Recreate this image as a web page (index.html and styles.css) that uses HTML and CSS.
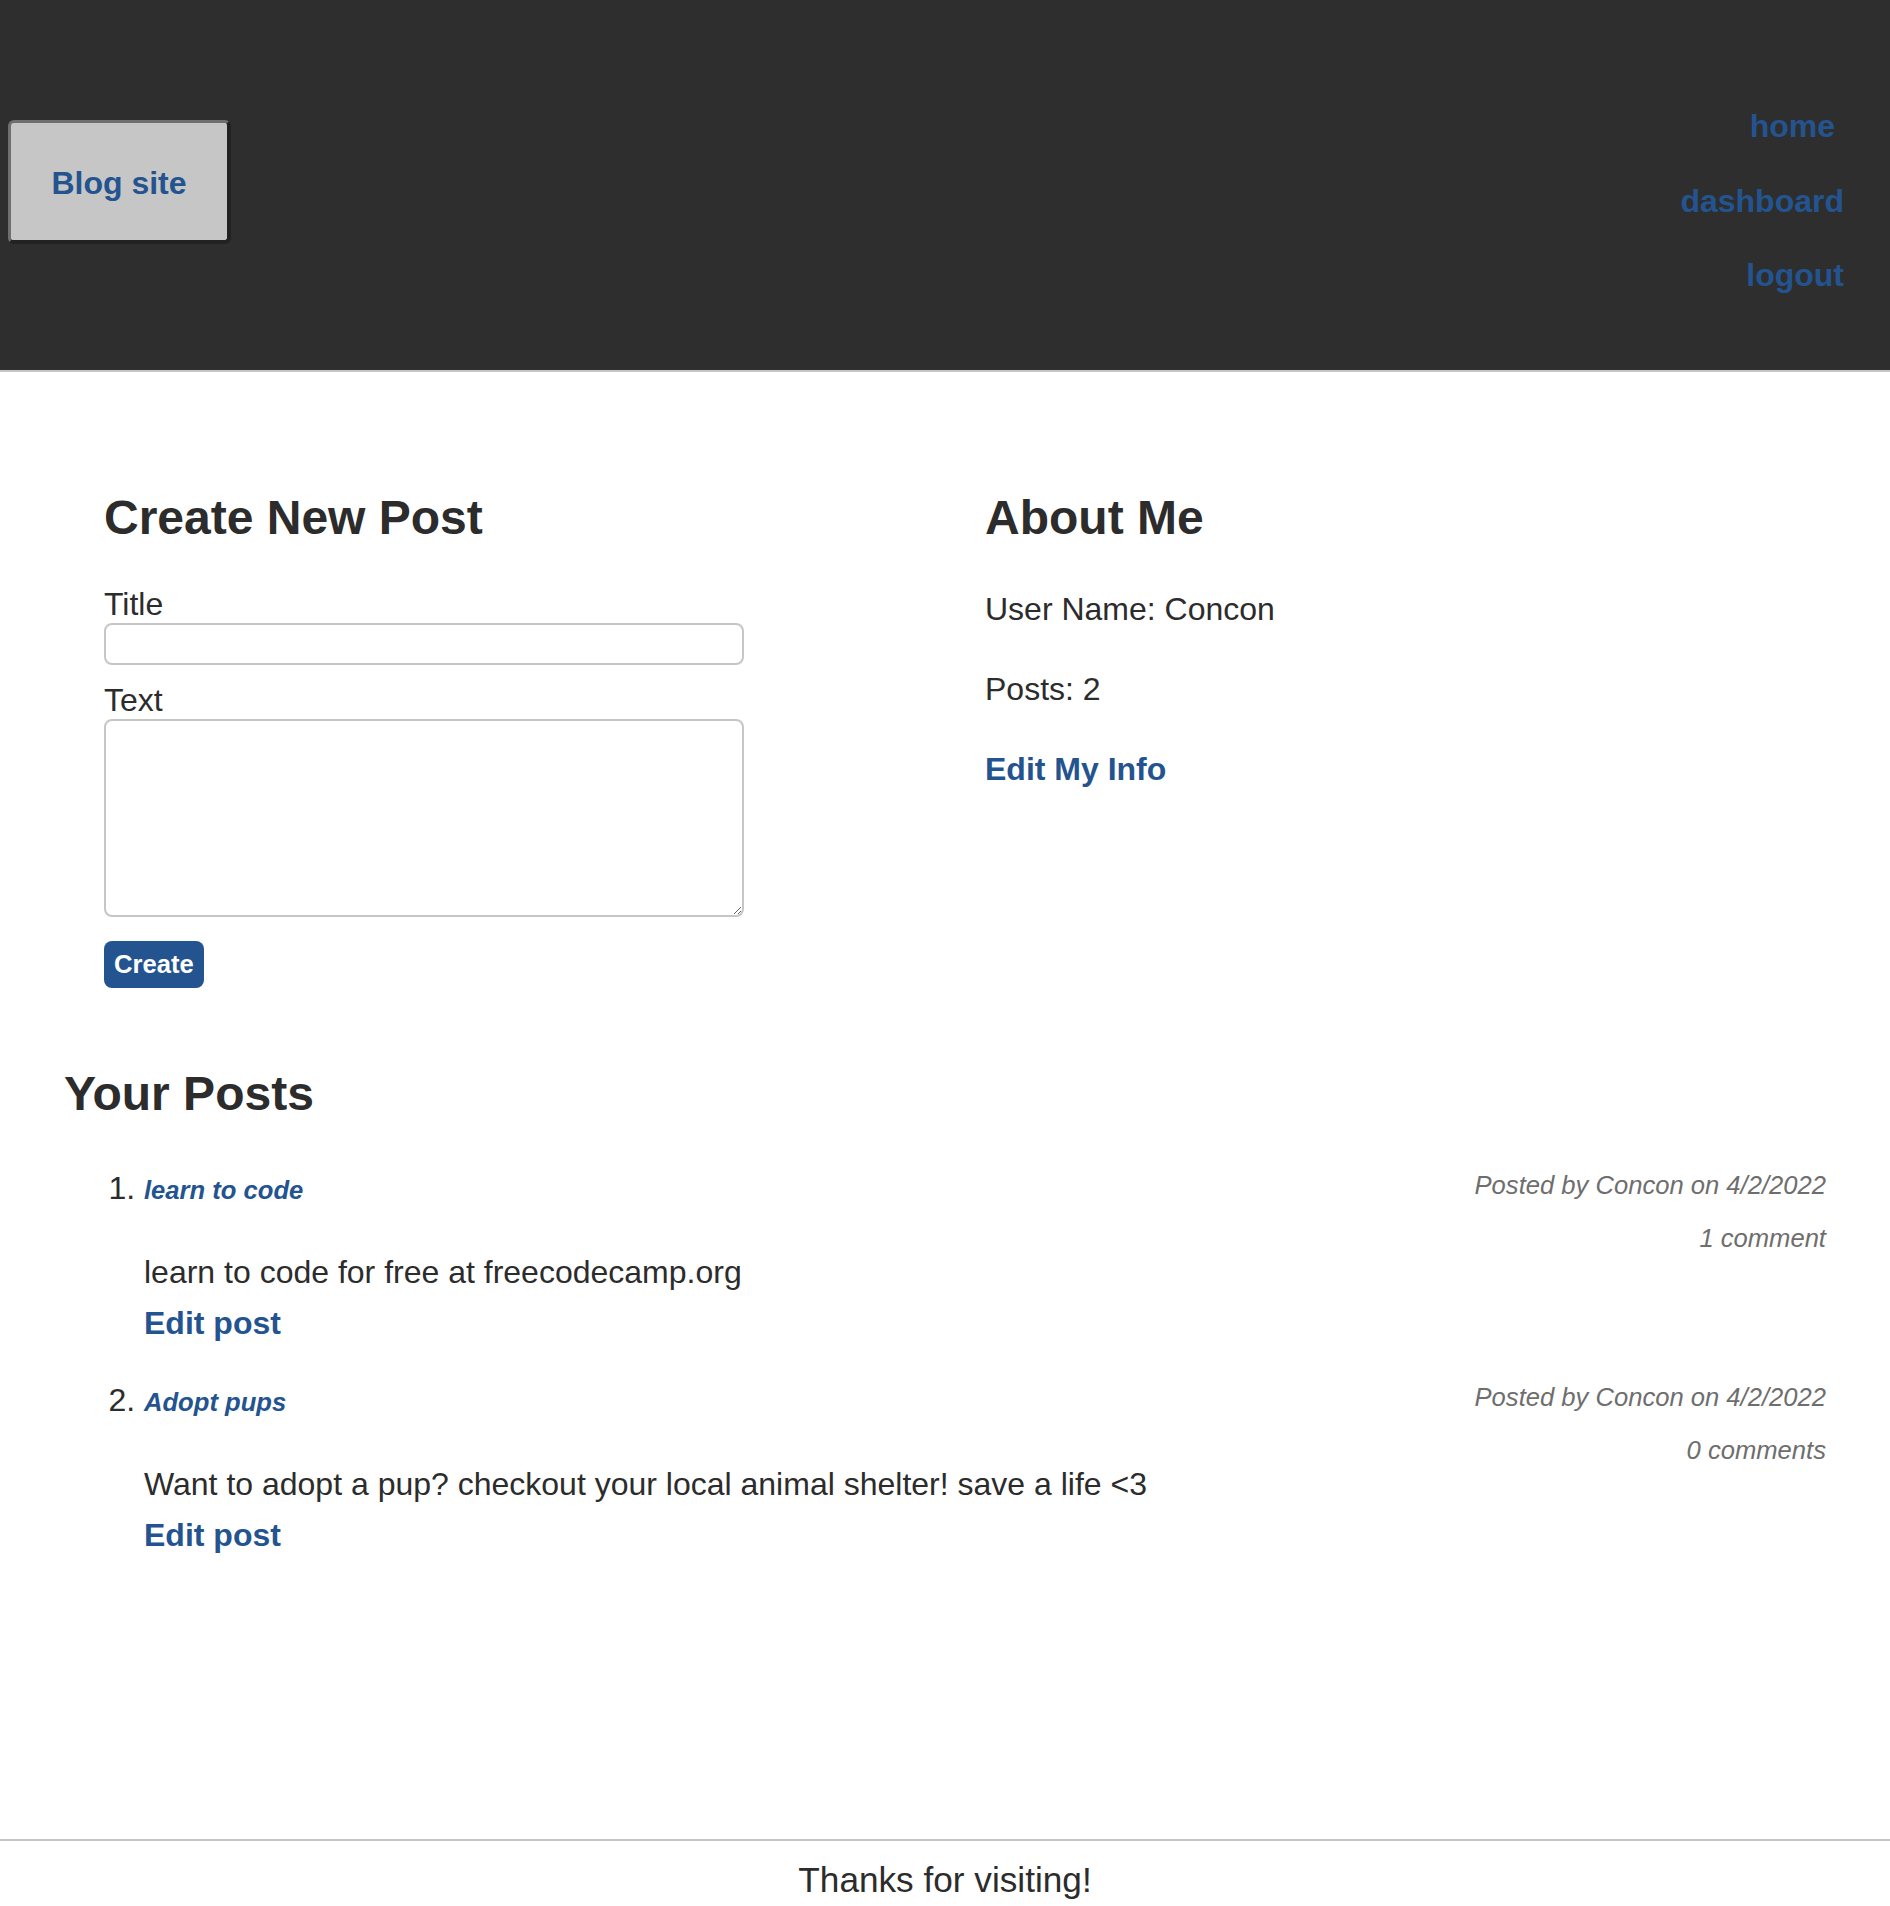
FILE: index.html
```html
<!DOCTYPE html>
<html lang="en">
<head>
<meta charset="utf-8">
<title>Blog site</title>
<link rel="stylesheet" href="styles.css">
</head>
<body>
<header class="site-header">
  <a class="logo" href="#">Blog site</a>
  <nav class="nav">
    <a class="nav-link nav-home" href="#">home</a>
    <a class="nav-link" href="#">dashboard</a>
    <a class="nav-link" href="#">logout</a>
  </nav>
</header>
<main class="main">
  <div class="columns">
    <section class="col">
      <h2 class="heading">Create New Post</h2>
      <form class="post-form">
        <label class="field-label first" for="title">Title</label>
        <input class="field-input" id="title" type="text">
        <label class="field-label second" for="text">Text</label>
        <textarea class="field-textarea" id="text"></textarea>
        <button class="create-btn" type="button">Create</button>
      </form>
    </section>
    <section class="col">
      <h2 class="heading">About Me</h2>
      <p class="about-line about-first">User Name: Concon</p>
      <p class="about-line about-second">Posts: 2</p>
      <a class="about-link" href="#">Edit My Info</a>
    </section>
  </div>
  <section class="posts">
    <h2 class="heading">Your Posts</h2>
    <ol class="post-list">
      <li class="post">
        <div class="post-head">
          <div class="post-title-line"><a class="post-title" href="#">learn to code</a></div>
          <div class="meta">
            <p class="meta-line">Posted by Concon on 4/2/2022</p>
            <p class="meta-line meta-count">1 comment</p>
          </div>
        </div>
        <p class="post-body">learn to code for free at freecodecamp.org</p>
        <a class="edit-link" href="#">Edit post</a>
      </li>
      <li class="post">
        <div class="post-head">
          <div class="post-title-line"><a class="post-title" href="#">Adopt pups</a></div>
          <div class="meta">
            <p class="meta-line">Posted by Concon on 4/2/2022</p>
            <p class="meta-line meta-count">0 comments</p>
          </div>
        </div>
        <p class="post-body">Want to adopt a pup? checkout your local animal shelter! save a life &lt;3</p>
        <a class="edit-link" href="#">Edit post</a>
      </li>
    </ol>
  </section>
</main>
<footer class="site-footer">Thanks for visiting!</footer>
</body>
</html>
```
FILE: styles.css
```css
html, body {
  margin: 0;
  padding: 0;
}

body {
  font-family: "Liberation Sans", Arial, Helvetica, sans-serif;
  font-size: 32px;
  line-height: 37px;
  color: #2c2c2c;
  background: #ffffff;
}

a {
  text-decoration: none;
  color: #24548f;
}

.site-header {
  background: #2e2e2e;
  height: 370px;
  border-bottom: 2px solid #c6c6c6;
  display: flex;
  justify-content: space-between;
  align-items: flex-start;
}

.logo {
  margin: 120px 0 0 8px;
  width: 223px;
  height: 124px;
  box-sizing: border-box;
  display: flex;
  align-items: center;
  justify-content: center;
  background: #c6c6c6;
  border-style: solid;
  border-width: 3px 4px 4px 3px;
  border-color: #6f6f6f #222222 #222222 #6f6f6f;
  border-radius: 6px;
  font-weight: bold;
  font-size: 32px;
  color: #24548f;
  padding-top: 3px;
}

.nav {
  margin: 108px 46px 0 0;
  display: flex;
  flex-direction: column;
  align-items: flex-end;
  gap: 37.5px;
}

.nav-link {
  font-weight: bold;
  font-size: 32px;
  line-height: 37px;
}

.nav-home {
  margin-right: 9px;
}

.main {
  padding: 0 64px;
}

.columns {
  display: grid;
  grid-template-columns: 1fr 1fr;
  padding-top: 118px;
}

.col {
  padding: 0 40px;
}

.heading {
  margin: 0;
  font-size: 48px;
  line-height: 55px;
  font-weight: bold;
  color: #2c2c2c;
}

.post-form {
  display: flex;
  flex-direction: column;
  align-items: flex-start;
}

.field-label {
  display: block;
  font-size: 32px;
  line-height: 37px;
}

.field-label.first {
  margin-top: 41px;
}

.field-label.second {
  margin-top: 17px;
}

.field-input,
.field-textarea {
  display: block;
  width: 640px;
  box-sizing: border-box;
  border: 2px solid #c6c6c6;
  border-radius: 8px;
  margin: 0;
  font-family: inherit;
  font-size: 20px;
  background: #ffffff;
}

.field-input {
  height: 42px;
}

.field-textarea {
  height: 198px;
}

.create-btn {
  margin-top: 24px;
  height: 47px;
  padding: 0 10px;
  background: #24548f;
  color: #ffffff;
  border: none;
  border-radius: 8px;
  font-family: inherit;
  font-weight: bold;
  font-size: 25.6px;
  line-height: 29px;
}

.about-line {
  margin: 0;
  font-size: 32px;
  line-height: 37px;
}

.about-first {
  margin-top: 46px;
}

.about-second {
  margin-top: 43px;
}

.about-link {
  display: block;
  margin-top: 43px;
  font-weight: bold;
  font-size: 32px;
  line-height: 37px;
}

.posts {
  margin-top: 78px;
}

.post-list {
  margin: 49px 0 0;
  padding-left: 80px;
  font-size: 32px;
  line-height: 37px;
}

.post + .post {
  margin-top: 40px;
}

.post-head {
  display: flex;
  justify-content: space-between;
  align-items: flex-start;
}

.post-title-line {
  line-height: 37px;
}

.post-title {
  font-style: italic;
  font-weight: bold;
  font-size: 25.6px;
}

.meta {
  text-align: right;
  padding-top: 1px;
}

.meta-line {
  margin: 0;
  font-style: italic;
  font-size: 25.6px;
  line-height: 29.4px;
  color: #6e6e6e;
}

.meta-count {
  margin-top: 24px;
}

.post-body {
  margin: 0;
  font-size: 32px;
  line-height: 37px;
}

.edit-link {
  display: block;
  width: max-content;
  margin-top: 14px;
  font-weight: bold;
  font-size: 32px;
  line-height: 37px;
}

.site-footer {
  margin-top: 285px;
  border-top: 2px solid #c6c6c6;
  padding-top: 19px;
  text-align: center;
  font-size: 35.2px;
  line-height: 40px;
  color: #2c2c2c;
}
```
